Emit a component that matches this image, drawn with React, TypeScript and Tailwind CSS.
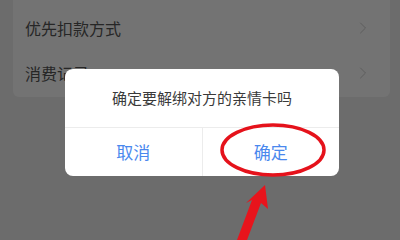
import { ChevronRight } from "lucide-react";

const rows = ["优先扣款方式", "消费记录"];

export default function App() {
  return (
    <div
      className="relative w-[400px] h-[240px] overflow-hidden bg-[#6c6c6c]"
      style={{ fontFamily: '"Noto Sans CJK SC", "Noto Sans", sans-serif' }}
    >
      {/* dimmed list card */}
      <div className="ml-[13px] w-[377px] bg-[#737373] pt-[5px] pb-[2px] rounded-b-md">
        {rows.map((label) => (
          <div key={label} className="h-[45px] flex items-center justify-between pl-[12px] pr-[17px]">
            <span className="text-[16px] text-[#262626]">{label}</span>
            <ChevronRight className="w-[20px] h-[20px] text-[#5e5e5e]" strokeWidth={1.2} />
          </div>
        ))}
      </div>

      {/* dialog */}
      <div className="absolute left-[65px] top-[69px] w-[274px] bg-white rounded-[8px] overflow-hidden">
        <div className="h-[59px] flex items-center justify-center border-b border-[#ececec]">
          <span className="text-[15px] text-[#3a3a3a]">确定要解绑对方的亲情卡吗</span>
        </div>
        <div className="h-[48px] flex">
          <button className="flex-1 flex items-center justify-center text-[17px] text-[#4a88ee] border-r border-[#ececec]">
            取消
          </button>
          <button className="flex-1 flex items-center justify-center text-[17px] text-[#4a88ee]">
            确定
          </button>
        </div>
      </div>

      {/* annotation */}
      <svg className="absolute left-0 top-0" width="400" height="240" viewBox="0 0 400 240">
        <ellipse cx="273" cy="150" rx="51" ry="25" fill="none" stroke="#e5121b" strokeWidth="3.5" />
        <polygon points="265,185 268,209 261,203 247,240 237,240 252,200 246,203" fill="#e8141c" />
      </svg>
    </div>
  );
}
